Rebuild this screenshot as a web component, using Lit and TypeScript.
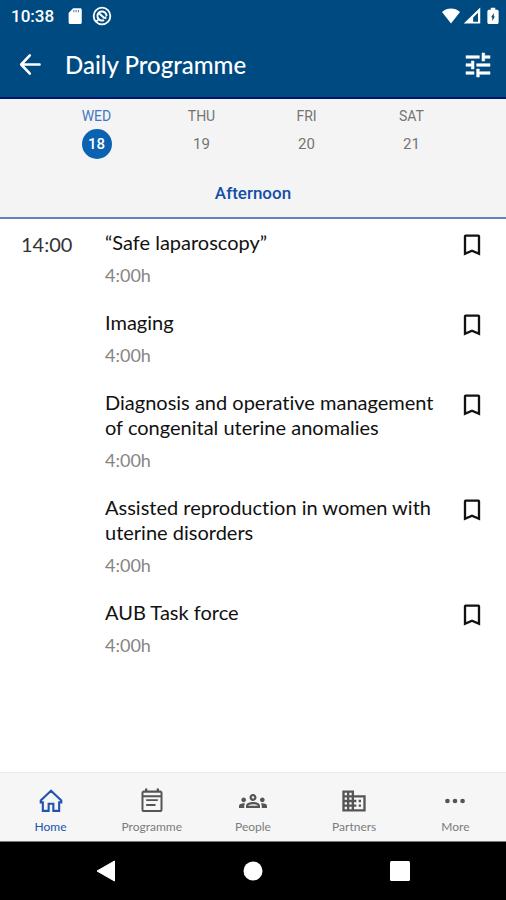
import { LitElement, html, css, svg } from "lit";
import { customElement, property, state } from "lit/decorators.js";
import { classMap } from "lit/directives/class-map.js";

const icons: Record<string, unknown> = {
  back: svg`<path d="M19 12H5M11.500 5L4.800 12l6.700 7" fill="none" stroke="currentColor" stroke-width="2" stroke-linejoin="round" stroke-linecap="round"/>`,
  tune: svg`<path d="M3 17v2h6v-2H3zM3 5v2h10V5H3zm10 16v-2h8v-2h-8v-2h-2v6h2zM7 9v2H3v2h4v2h2V9H7zm14 4v-2H11v2h10zm-6-4h2V7h4V5h-4V3h-2v6z" stroke="currentColor" stroke-width=".4"/>`,
  bookmark: svg`<path d="M17 3H7c-1.100 0-2 .5-2 1.500V21l7-3 7 3V4.500C19 3.500 18.100 3 17 3zm0 15l-5-2.180L7 18V5h10v13z"/>`,
  home: svg`<path d="M12 3.200L3.200 11.500V13.200H5V20.500H10V14.400H14V20.500H19V13.200H20.800V11.500Z" fill="none" stroke="currentColor" stroke-width="1.800"/>`,
  programme: svg`<path d="M17 10.500H7v1.600h10zm2-7.500h-1V1.200h-2V3H8V1.200H6V3H5C3.900 3 3 3.900 3 5v14.500c0 1.100.9 2 2 2h14c1.100 0 2-.9 2-2V5c0-1.100-.9-2-2-2zm.3 16.700H4.700V8.700h14.600zm0-12.700H4.700V5h14.600zM15 14.500H7v1.700h8z"/>`,
  people: svg`<path d="M4 13c1.100 0 2-.9 2-2s-.9-2-2-2-2 .9-2 2 .9 2 2 2zm1.130 1.100C4.760 14.040 4.390 14 4 14c-.99 0-1.930.21-2.780.58C.48 14.900 0 15.620 0 16.430V18h4.500v-1.610c0-.83.23-1.610.63-2.290zM20 13c1.100 0 2-.9 2-2s-.9-2-2-2-2 .9-2 2 .9 2 2 2zm4 3.430c0-.81-.48-1.530-1.220-1.850C21.930 14.210 20.990 14 20 14c-.39 0-.76.040-1.130.1.400.68.630 1.460.630 2.290V18H24v-1.570zm-7.760-2.780C15.070 13.130 13.630 12.750 12 12.750s-3.070.39-4.240.9C6.680 14.130 6 15.210 6 16.390V18h12v-1.610c0-1.180-.68-2.260-1.760-2.740zM8.070 16c.09-.23.130-.39.910-.69.970-.38 1.990-.56 3.020-.56s2.050.18 3.020.56c.77.300.81.460.91.690H8.070zM12 8c.55 0 1 .45 1 1s-.45 1-1 1-1-.45-1-1 .45-1 1-1m0-2c-1.660 0-3 1.340-3 3s1.340 3 3 3 3-1.340 3-3-1.340-3-3-3z"/>`,
  partners: svg`<path d="M12 7V3H2v18h20V7H12zM6 19H4v-2h2v2zm0-4H4v-2h2v2zm0-4H4V9h2v2zm0-4H4V5h2v2zm4 12H8v-2h2v2zm0-4H8v-2h2v2zm0-4H8V9h2v2zm0-4H8V5h2v2zm10 12h-8v-2h2v-2h-2v-2h2v-2h-2V9h8v10zm-2-8h-2v2h2v-2zm0 4h-2v2h2v-2z"/>`,
  more: svg`<circle cx="5.500" cy="12" r="2"/><circle cx="12" cy="12" r="2"/><circle cx="18.500" cy="12" r="2"/>`,
  sd: svg`<path d="M19 1.500H9.500L3.500 8v12.500c0 1.100.9 2 2 2h13.500c1.100 0 2-.9 2-2V3.500c0-1.100-.9-2-2-2z"/><path d="M10.500 4v3M13.500 4v3M16.500 4v3" stroke="#004a82" stroke-width="1"/>`,
  disc: svg`<circle cx="12" cy="12" r="10" fill="none" stroke="currentColor" stroke-width="2.200"/><path d="M17.500 12a5.500 5.500 0 1 0-3 4.900M8 8.500l6.500 5.500" fill="none" stroke="currentColor" stroke-width="2.400"/><path d="M12 14.500l5 1.500.5-4z"/><path d="M4.500 19l3-2.500" stroke="currentColor" stroke-width="2"/>`,
  wifi: svg`<path d="M12 22L0 6.500C3.500 3.500 7.500 2 12 2s8.500 1.500 12 4.500z"/>`,
  signal: svg`<path fill-rule="evenodd" d="M1 22L23 .5V22ZM13.500 19.500H20V7.500L13.500 14Z"/>`,
  battery: svg`<path fill-rule="evenodd" d="M17 3.500H15V1H9v2.500H7C5.600 3.500 4.500 4.200 4.500 5.600v14.900c0 1.200.8 2 2.200 2h10.600c1.400 0 2.200-.8 2.200-2V5.600c0-1.400-1.100-2.100-2.500-2.100zM11 18.500v-5H9.500L13 8v4.500h1.500z"/>`,
  navBack: svg`<path d="M20.500 2V22L3 12Z" stroke="currentColor" stroke-linejoin="round"/>`,
  navHome: svg`<circle cx="12" cy="12" r="9.500"/>`,
  navRecent: svg`<rect x="2" y="2" width="20" height="20" rx="1.500"/>`,
};

@customElement("ui-icon")
export class UiIcon extends LitElement {
  @property() name = "";
  static styles = css`
    :host { display: inline-flex; width: 24px; height: 24px; flex: none; }
    .glyph { width: 100%; height: 100%; display: block; fill: currentColor; }
  `;
  render() {
    return html`<svg class="glyph" viewBox="0 0 24 24" aria-hidden="true">${icons[this.name]}</svg>`;
  }
}

const days = [
  { name: "WED", date: 18 },
  { name: "THU", date: 19 },
  { name: "FRI", date: 20 },
  { name: "SAT", date: 21 },
];

const sessions = [
  "“Safe laparoscopy”",
  "Imaging",
  "Diagnosis and operative management of congenital uterine anomalies",
  "Assisted reproduction in women with uterine disorders",
  "AUB Task force",
];

const tabs = [
  { label: "Home", icon: "home" },
  { label: "Programme", icon: "programme" },
  { label: "People", icon: "people" },
  { label: "Partners", icon: "partners" },
  { label: "More", icon: "more" },
];

@customElement("app-root")
export class AppRoot extends LitElement {
  @state() private day = 18;
  @state() private saved = new Set<number>();

  static styles = css`
    :host {
      display: flex;
      flex-direction: column;
      min-height: 100vh;
      background: #fff;
      color: #111;
      font-family: Lato, sans-serif;
      font-variant-ligatures: none;
    }
    * { box-sizing: border-box; }
    button {
      border: 0;
      padding: 0;
      background: none;
      color: inherit;
      font: inherit;
      cursor: pointer;
    }
    .top {
      background: #004a82;
      color: #fff;
      border-bottom: 2px solid #00136f;
    }
    .status {
      display: flex;
      align-items: center;
      justify-content: space-between;
      height: 32px;
      padding: 0 4px 0 11px;
      font: 500 17px/32px Roboto, sans-serif;
    }
    .group { display: flex; align-items: center; gap: 3px; }
    .left { gap: 8px; }
    .clock { margin-right: 4px; }
    .status ui-icon { width: 18px; height: 18px; }
    .status .disc { width: 20px; height: 20px; }
    .bar {
      display: flex;
      align-items: center;
      height: 65px;
      padding: 0 12px 0 15px;
    }
    .bar button { display: flex; }
    .back ui-icon { width: 31px; height: 31px; }
    .tune ui-icon { width: 32px; height: 32px; }
    h1 {
      flex: 1;
      margin: 0 0 0 19px;
      font-size: 24px;
      line-height: 32px;
      font-weight: 500;
    }
    .dates {
      background: #f4f4f5;
      border-bottom: 2px solid #6482bd;
      font-family: Roboto, sans-serif;
    }
    .days {
      display: grid;
      grid-template-columns: repeat(4, 1fr);
      padding: 8px 42px 0 44px;
    }
    .day {
      display: flex;
      flex-direction: column;
      align-items: center;
      gap: 4px;
      font-size: 14px;
      line-height: 18px;
      color: #747474;
    }
    .date {
      width: 30px;
      height: 30px;
      border-radius: 50%;
      font-size: 15px;
      line-height: 30px;
    }
    .day.on { color: #4577bf; }
    .day.on .date { background: #0b62b0; color: #fff; font-weight: 500; }
    h2 {
      margin: 0;
      padding: 21px 0 11px;
      text-align: center;
      font-size: 17px;
      line-height: 26px;
      font-weight: 500;
      color: #134fa6;
    }
    main {
      flex: 1;
      display: grid;
      grid-template-columns: 84px 1fr;
      align-items: start;
      padding: 11px 20px 0 21px;
    }
    .time { font-size: 20px; line-height: 28px; color: #333; }
    ul { list-style: none; margin: 0; padding: 0; }
    li { display: flex; gap: 12px; padding-bottom: 23px; }
    .info { flex: 1; }
    h3 { margin: 0; font-size: 20px; line-height: 25px; font-weight: 400; color: #111; }
    .length { margin: 8px 0 0; font-size: 18px; line-height: 24px; color: #858585; }
    .save { display: flex; align-self: flex-start; width: 28px; padding-top: 1px; color: #111; }
    .save ui-icon { width: 28px; height: 28px; }
    .tabs {
      display: grid;
      grid-template-columns: repeat(5, 1fr);
      height: 70px;
      background: #f6f6f6;
      border-top: 1px solid #e9e9e9;
      border-bottom: 1px solid #777;
    }
    .tab {
      display: flex;
      flex-direction: column;
      align-items: center;
      justify-content: flex-end;
      gap: 4px;
      padding-bottom: 6px;
      font-size: 12px;
      line-height: 16px;
      color: #7c7c7c;
      text-decoration: none;
    }
    .tab ui-icon { width: 28px; height: 28px; color: #555; }
    .tab.on, .tab.on ui-icon { color: #2054ad; }
    .system {
      display: grid;
      grid-template-columns: repeat(3, 1fr);
      height: 58px;
      padding: 0 32px;
      background: #000;
      color: #fff;
    }
    .system button { display: flex; align-items: center; justify-content: center; }
  `;

  private toggle(i: number) {
    const next = new Set(this.saved);
    next.has(i) ? next.delete(i) : next.add(i);
    this.saved = next;
  }

  render() {
    return html`
      <header class="top">
        <div class="status">
          <div class="group left">
            <span class="clock">10:38</span>
            <ui-icon name="sd"></ui-icon><ui-icon class="disc" name="disc"></ui-icon>
          </div>
          <div class="group">
            <ui-icon name="wifi"></ui-icon><ui-icon name="signal"></ui-icon><ui-icon name="battery"></ui-icon>
          </div>
        </div>
        <div class="bar">
          <button class="back" aria-label="Back"><ui-icon name="back"></ui-icon></button>
          <h1>Daily Programme</h1>
          <button class="tune" aria-label="Filter"><ui-icon name="tune"></ui-icon></button>
        </div>
      </header>
      <section class="dates">
        <div class="days">
          ${days.map((d) => html`
            <button class=${classMap({ day: true, on: d.date === this.day })}
              aria-pressed=${d.date === this.day} @click=${() => (this.day = d.date)}>
              <span>${d.name}</span><span class="date">${d.date}</span>
            </button>`)}
        </div>
        <h2>Afternoon</h2>
      </section>
      <main>
        <time class="time">14:00</time>
        <ul>
          ${sessions.map((title, i) => html`
            <li>
              <div class="info"><h3>${title}</h3><p class="length">4:00h</p></div>
              <button class="save" aria-label="Bookmark" aria-pressed=${this.saved.has(i)}
                @click=${() => this.toggle(i)}><ui-icon name="bookmark"></ui-icon></button>
            </li>`)}
        </ul>
      </main>
      <nav class="tabs">
        ${tabs.map((t, i) => html`
          <a href="#" class=${classMap({ tab: true, on: i === 0 })}>
            <ui-icon name=${t.icon}></ui-icon><span>${t.label}</span>
          </a>`)}
      </nav>
      <div class="system">
        <button aria-label="System back"><ui-icon name="navBack"></ui-icon></button>
        <button aria-label="System home"><ui-icon name="navHome"></ui-icon></button>
        <button aria-label="Recent apps"><ui-icon name="navRecent"></ui-icon></button>
      </div>
    `;
  }
}
